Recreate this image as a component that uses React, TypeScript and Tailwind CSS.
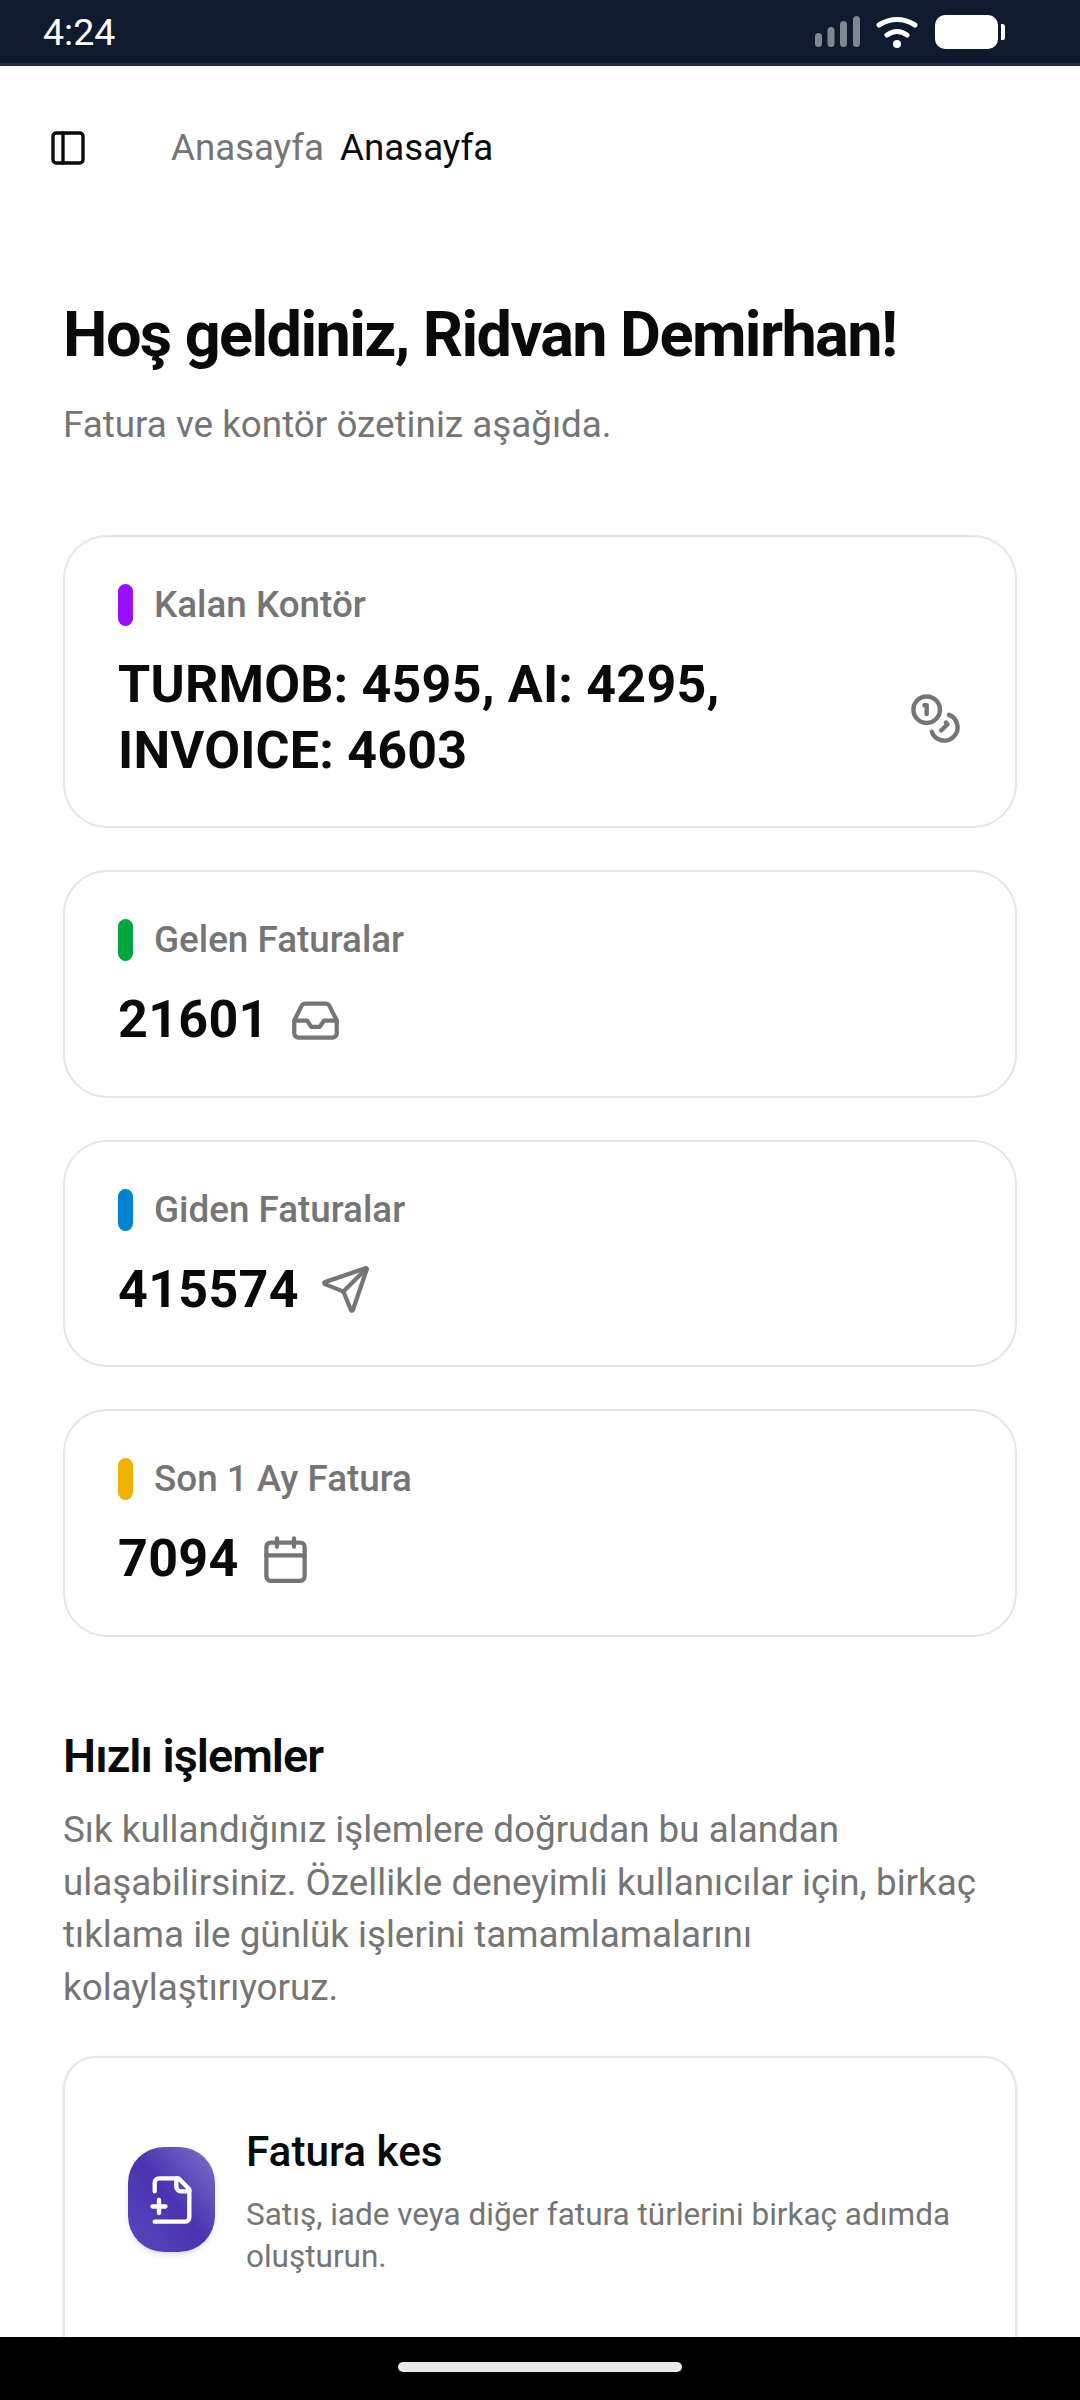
import React from "react";
import { PanelLeft, Coins, Send, Calendar } from "lucide-react";

function StatusBar() {
  return (
    <div className="h-[66px] shrink-0 bg-[#0f1a2e] border-b-[3px] border-[#232d40] flex items-center justify-between pl-[43px] pr-[75px]">
      <span className="text-[37.5px] leading-[60px] text-white">4:24</span>
      <svg width="190" height="36" viewBox="0 0 190 36">
        <g fill="#7f8591">
          <rect x="0" y="19" width="7" height="14" rx="3.5" />
          <rect x="12.5" y="13" width="7" height="20" rx="3.5" />
          <rect x="25" y="7" width="7" height="26" rx="3.5" />
          <rect x="38" y="2" width="7" height="31" rx="3.5" />
        </g>
        <g fill="none" stroke="#fff" strokeLinecap="round">
          <path d="M64 11 Q82 0 100 11" strokeWidth="5" />
          <path d="M72 21 Q82 14 92 21" strokeWidth="5" />
        </g>
        <circle cx="82" cy="30" r="4" fill="#fff" />
        <rect x="120" y="1" width="63" height="34" rx="10" fill="#fff" />
        <path d="M186 10 h1.5 a2.5 2.5 0 0 1 2.5 2.5 v11 a2.5 2.5 0 0 1 -2.5 2.5 h-1.5 z" fill="#fff" />
      </svg>
    </div>
  );
}

function Card({ color, label, children, pb }: { color: string; label: string; children: React.ReactNode; pb: string }) {
  return (
    <div className={`rounded-[44px] border-2 border-[#e5e5e5] bg-white px-[53px] pt-[47px] ${pb}`}>
      <div className="flex items-center gap-[21px] h-[42px]">
        <span className={`w-[15px] h-[42px] rounded-full ${color}`} />
        <span className="text-[36.8px] font-medium leading-[42px] text-[#757575]">{label}</span>
      </div>
      {children}
    </div>
  );
}

function Stat({ value, children }: { value: string; children: React.ReactNode }) {
  return (
    <div className="mt-[30px] flex items-center gap-[21px] h-[58px]">
      <span className="text-[52px] font-bold leading-[58px] text-[#0a0a0a] tracking-[0.3px]">{value}</span>
      {children}
    </div>
  );
}

function InboxIcon() {
  return (
    <svg width="51" height="51" viewBox="0 0 24 24" fill="none" stroke="#757575" strokeWidth="2" strokeLinecap="round" strokeLinejoin="round">
      <polyline points="22 12 16 12 14 15 10 15 8 12 2 12" />
      <path d="M5.45 5.11 2 12v6a2 2 0 0 0 2 2h16a2 2 0 0 0 2-2v-6l-3.45-6.89A2 2 0 0 0 16.76 4H7.24a2 2 0 0 0-1.79 1.11z" />
    </svg>
  );
}

export default function App() {
  return (
    <div className="w-[1080px] h-[2400px] flex flex-col bg-white overflow-hidden font-['Roboto',sans-serif]">
      <StatusBar />
      <main className="flex-1 min-h-0 overflow-hidden">
        <header className="h-[161px] flex items-center pl-[48px] pt-[2px]">
          <PanelLeft size={40} strokeWidth={2} className="text-[#0a0a0a]" />
          <span className="ml-[83px] text-[36.7px] text-[#757575]">Anasayfa</span>
          <span className="ml-[16px] text-[36.7px] text-[#0a0a0a]">Anasayfa</span>
        </header>

        <div className="px-[63px] pt-[68px]">
          <h1 className="text-[63px] leading-[80px] font-bold tracking-[-1.6px] text-[#0a0a0a]">Hoş geldiniz, Ridvan Demirhan!</h1>
          <p className="mt-[24.5px] text-[36.8px] leading-[50px] text-[#757575]">Fatura ve kontör özetiniz aşağıda.</p>

          <div className="mt-[85.5px] flex flex-col gap-[42px]">
            <Card color="bg-[#9810fa]" label="Kalan Kontör" pb="pb-[42px]">
              <div className="mt-[26px] flex items-center justify-between">
                <span className="w-[700px] text-[52px] font-bold leading-[66px] text-[#0a0a0a] tracking-[0.2px]">TURMOB: 4595, AI: 4295, INVOICE: 4603</span>
                <Coins size={53} className="text-[#757575]" />
              </div>
            </Card>
            <Card color="bg-[#00a63e]" label="Gelen Faturalar" pb="pb-[46.5px]">
              <Stat value="21601"><InboxIcon /></Stat>
            </Card>
            <Card color="bg-[#0084d1]" label="Giden Faturalar" pb="pb-[46.5px]">
              <Stat value="415574"><Send size={51} className="text-[#757575]" /></Stat>
            </Card>
            <Card color="bg-[#f0b100]" label="Son 1 Ay Fatura" pb="pb-[46.5px]">
              <Stat value="7094"><Calendar size={51} className="text-[#757575]" /></Stat>
            </Card>
          </div>

          <h2 className="mt-[93px] text-[46.8px] leading-[52px] font-semibold tracking-[-1px] text-[#0a0a0a]">Hızlı işlemler</h2>
          <p className="mt-[22.5px] text-[36.8px] leading-[52.5px] text-[#757575]">Sık kullandığınız işlemlere doğrudan bu alandan ulaşabilirsiniz. Özellikle deneyimli kullanıcılar için, birkaç tıklama ile günlük işlerini tamamlamalarını kolaylaştırıyoruz.</p>

          <div className="mt-[42px] rounded-t-[33px] border-2 border-b-0 border-[#e5e5e5] shadow-sm h-[400px] pl-[63px] pr-[50px] pt-[63px] flex items-start">
            <div className="mt-[26px] w-[87px] h-[105px] shrink-0 rounded-[36px] bg-gradient-to-tr from-[#5a49bd] via-[#4a32b0] to-[#8070c8] flex items-center justify-center shadow-md">
              <svg width="52" height="52" viewBox="0 0 24 24" fill="none" stroke="#fff" strokeWidth="2" strokeLinecap="round" strokeLinejoin="round">
                <path d="M4 22h14a2 2 0 0 0 2-2V7l-5-5H6a2 2 0 0 0-2 2v4" />
                <path d="M14 2v4a2 2 0 0 0 2 2h4" />
                <path d="M3 15h6" />
                <path d="M6 12v6" />
              </svg>
            </div>
            <div className="ml-[31px] mt-[6px]">
              <div className="text-[42.3px] leading-[50px] font-medium text-[#0a0a0a]">Fatura kes</div>
              <p className="mt-[17px] text-[31.5px] leading-[41.5px] text-[#757575]">Satış, iade veya diğer fatura türlerini birkaç adımda oluşturun.</p>
            </div>
          </div>
        </div>
      </main>
      <footer className="h-[63px] shrink-0 bg-black flex items-center justify-center">
        <div className="w-[284px] h-[10px] rounded-full bg-[#e8e8e8] mt-[-3px]" />
      </footer>
    </div>
  );
}
